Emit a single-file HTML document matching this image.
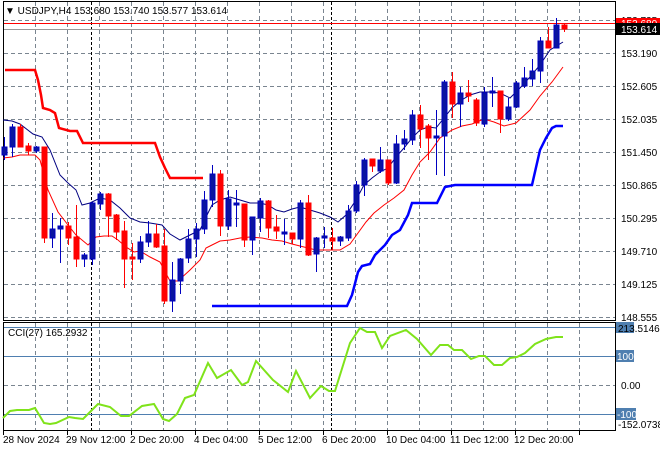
<!DOCTYPE html>
<html><head><meta charset="utf-8"><style>
html,body{margin:0;padding:0;background:#fff;width:660px;height:450px;overflow:hidden}
svg{display:block;font-family:"Liberation Sans",sans-serif;font-size:10px}
</style></head><body>
<svg width="660" height="450" viewBox="0 0 660 450" xmlns="http://www.w3.org/2000/svg">
<rect width="660" height="450" fill="#fff"/>
<g stroke="#7a8590" stroke-width="1" stroke-dasharray="4,3" fill="none">
<path d="M4 20.5H615M4 53.5H615M4 86.5H615M4 119.5H615M4 152.5H615M4 185.5H615M4 218.5H615M4 251.5H615M4 284.5H615M4 317.5H615"/>
<path d="M35.5 2V320M67.5 2V320M99.5 2V320M131.5 2V320M163.5 2V320M195.5 2V320M227.5 2V320M259.5 2V320M291.5 2V320M323.5 2V320M355.5 2V320M387.5 2V320M419.5 2V320M451.5 2V320M483.5 2V320M515.5 2V320M547.5 2V320M579.5 2V320"/>
<path d="M4 385.5H615"/>
<path d="M35.5 323V430M67.5 323V430M99.5 323V430M131.5 323V430M163.5 323V430M195.5 323V430M227.5 323V430M259.5 323V430M291.5 323V430M323.5 323V430M355.5 323V430M387.5 323V430M419.5 323V430M451.5 323V430M483.5 323V430M515.5 323V430M547.5 323V430M579.5 323V430"/>
</g>
<g stroke="#000" stroke-dasharray="3,2"><path d="M91.5 2V320M331.5 2V320M91.5 323V430M331.5 323V430"/></g>
<rect x="3.5" y="1.5" width="612" height="319" fill="none" stroke="#000"/>
<rect x="3.5" y="322.5" width="612" height="108" fill="none" stroke="#000"/>
<path d="M4 23.5H615" stroke="#ff0000"/>
<path d="M4 29.5H615" stroke="#999"/>
<polyline fill="none" stroke="#ff0000" stroke-width="2.5" points="5,70 35,70 38,80 41,95 43,108 50,110 55,113 59,128 70,131 77,131 83,143 155,143 160,157 165,168 170,178 203,178"/>
<polyline fill="none" stroke="#0000ff" stroke-width="2.5" points="212,306 347,306 352,295 358,272 362,266 370,264 375,255 380,250 385,245 392,235 400,230 408,215 412,203 437,203 445,187 455,185 532,185 540,150 546,138 552,128 556,126 563,126"/>
<polyline fill="none" stroke="#000080" stroke-width="1" points="3,120 12,121 20,124 33,134 42,137 50,150 60,175 68,183 76,190 82,205 90,203 100,198 110,200 120,208 130,218 140,222 150,223 162,225 170,234 180,240 190,235 200,230 208,213 212,205 220,200 230,197 240,200 250,203 260,203 268,205 276,210 284,212 292,209 300,207 310,210 320,213 330,217 338,222 346,215 356,200 364,185 372,178 380,172 388,168 396,157 404,148 412,138 420,130 428,127 436,128 444,118 452,108 460,101 470,95 480,92 490,92 500,93 510,98 520,88 530,77 540,65 550,50 563,42"/>
<polyline fill="none" stroke="#ff0000" stroke-width="1" points="3,158 12,157 20,155 35,155 40,160 48,190 58,212 68,225 76,235 88,245 96,237 104,236 112,236 118,240 126,247 134,252 140,251 150,257 160,262 170,281 178,281 190,270 200,260 206,248 212,245 220,241 230,240 240,238 250,237 262,238 272,240 282,241 292,244 304,247 316,250 326,250 340,250 350,244 358,233 366,222 374,213 384,205 394,198 404,190 412,175 420,162 430,152 440,138 452,130 462,126 472,124 484,119 494,122 504,126 516,123 530,110 540,96 552,82 563,67"/>
<g stroke-width="1">
<g stroke="#0000c0" fill="#0a14a0">
<path d="M4.5 137V160M12.5 124V157M36.5 146V153M52.5 213V248M60.5 218V263M84.5 253V267M92.5 202V265M100.5 192V210M140.5 236V263M148.5 221V247M172.5 262V312M180.5 258V294M188.5 229V263M196.5 223V257M204.5 191V234M212.5 165V207M228.5 190V230M236.5 190V227M252.5 217V255M260.5 198V232M284.5 219V245M300.5 200V248M316.5 237V272M324.5 227V248M340.5 236V246M348.5 205V241M356.5 181V213M364.5 158V196M380.5 147V173M396.5 135V184M404.5 130V150M412.5 110V145M436.5 110V175M444.5 80V176M460.5 87V127M484.5 87V127M492.5 77V107M508.5 98V121M516.5 81V108M524.5 67V88M532.5 59V86M540.5 37V83M556.5 18V48"/>
<rect x="2" y="147" width="5" height="8"/><rect x="10" y="127" width="5" height="20"/><rect x="34" y="147" width="5" height="4"/><rect x="50" y="229" width="5" height="9"/><rect x="58" y="226" width="5" height="3"/><rect x="82" y="255" width="5" height="4"/><rect x="90" y="203" width="5" height="56"/><rect x="98" y="194" width="5" height="10"/><rect x="138" y="242" width="5" height="17"/><rect x="146" y="234" width="5" height="8"/><rect x="170" y="280" width="5" height="21"/><rect x="178" y="259" width="5" height="22"/><rect x="186" y="239" width="5" height="19"/><rect x="194" y="229" width="5" height="10"/><rect x="202" y="200" width="5" height="29"/><rect x="210" y="174" width="5" height="26"/><rect x="226" y="199" width="5" height="27"/><rect x="234" y="203" width="5" height="2"/><rect x="250" y="217" width="5" height="23"/><rect x="258" y="201" width="5" height="17"/><rect x="282" y="232" width="5" height="2"/><rect x="298" y="203" width="5" height="36"/><rect x="314" y="238" width="5" height="16"/><rect x="322" y="236" width="5" height="2"/><rect x="338" y="237" width="5" height="4"/><rect x="346" y="211" width="5" height="27"/><rect x="354" y="185" width="5" height="26"/><rect x="362" y="160" width="5" height="25"/><rect x="378" y="160" width="5" height="11"/><rect x="394" y="144" width="5" height="39"/><rect x="402" y="139" width="5" height="5"/><rect x="410" y="115" width="5" height="25"/><rect x="434" y="136" width="5" height="2"/><rect x="442" y="82" width="5" height="54"/><rect x="458" y="93" width="5" height="11"/><rect x="482" y="93" width="5" height="31"/><rect x="490" y="91" width="5" height="2"/><rect x="506" y="107" width="5" height="12"/><rect x="514" y="83" width="5" height="24"/><rect x="522" y="78" width="5" height="8"/><rect x="530" y="71" width="5" height="8"/><rect x="538" y="41" width="5" height="30"/><rect x="554" y="25" width="5" height="23"/>
</g>
<g stroke="#ff0000" fill="#ff0000">
<path d="M20.5 124V147M28.5 143V155M44.5 147V243M68.5 222V245M76.5 205V267M108.5 193V237M116.5 214V240M124.5 221V288M132.5 243V280M156.5 224V248M164.5 229V304M220.5 170V236M244.5 204V247M268.5 200V238M276.5 215V239M292.5 233V244M308.5 195V256M332.5 228V250M372.5 159V172M388.5 160V185M420.5 105V148M428.5 124V160M452.5 72V118M468.5 80V102M476.5 98V126M500.5 91V133M548.5 27V48M564.5 23V32"/>
<rect x="18" y="127" width="5" height="20"/><rect x="26" y="146" width="5" height="5"/><rect x="42" y="147" width="5" height="91"/><rect x="66" y="226" width="5" height="12"/><rect x="74" y="237" width="5" height="22"/><rect x="106" y="194" width="5" height="22"/><rect x="114" y="215" width="5" height="17"/><rect x="122" y="231" width="5" height="28"/><rect x="130" y="257" width="5" height="2"/><rect x="154" y="234" width="5" height="13"/><rect x="162" y="246" width="5" height="55"/><rect x="218" y="174" width="5" height="52"/><rect x="242" y="204" width="5" height="36"/><rect x="266" y="201" width="5" height="27"/><rect x="274" y="227" width="5" height="4"/><rect x="290" y="233" width="5" height="6"/><rect x="306" y="203" width="5" height="52"/><rect x="330" y="238" width="5" height="3"/><rect x="370" y="159" width="5" height="7"/><rect x="386" y="160" width="5" height="23"/><rect x="418" y="115" width="5" height="14"/><rect x="426" y="126" width="5" height="12"/><rect x="450" y="82" width="5" height="22"/><rect x="466" y="93" width="5" height="3"/><rect x="474" y="100" width="5" height="23"/><rect x="498" y="91" width="5" height="28"/><rect x="546" y="41" width="5" height="7"/><rect x="562" y="25" width="5" height="4"/>
</g>
</g>
<g stroke="#4f7fb0"><path d="M4 327.5H615M4 356.5H615M4 414.5H615"/></g>
<polyline fill="none" stroke="#7fe31a" stroke-width="2" points="3,418 10,411 17,410 29,410 35,408 44,423 50,424 56,423 69,417 75,418 83,419 90,412 98,404 110,407 121,416 129,416 142,406 154,404 163,419 169,421 177,414 185,398 194,395 208,363 217,378 231,370 242,385 248,382 256,361 273,380 288,392 296,371 310,398 321,386 329,391 335,391 350,343 360,328 367,332 375,332 382,348 390,336 406,330 417,339 431,355 440,345 448,345 454,350 462,350 471,359 479,356 485,356 494,365 502,365 510,358 517,357 525,353 535,344 546,339 556,337 563,337"/>
<text x="5" y="14" fill="#000">▼ USDJPY,H4  153.680 153.740 153.577 153.614</text>
<text x="8" y="336" fill="#000">CCI(27) 165.2932</text>
<g fill="#000">
<text x="621" y="24">153.725</text>
<text x="621" y="57">153.190</text>
<text x="621" y="90">152.605</text>
<text x="621" y="123">152.035</text>
<text x="621" y="156">151.450</text>
<text x="621" y="189">150.865</text>
<text x="621" y="222">150.295</text>
<text x="621" y="255">149.710</text>
<text x="621" y="288">149.125</text>
<text x="621" y="321">148.555</text>
</g>
<rect x="616" y="18" width="44" height="11" fill="#ff0000"/>
<text x="621" y="27" fill="#fff">153.680</text>
<rect x="616" y="23" width="44" height="12" fill="#000"/>
<text x="621" y="33" fill="#fff">153.614</text>
<rect x="616" y="322" width="18" height="11" fill="#4f7fb0"/>
<text x="618" y="332" fill="#000">213.5146</text>
<rect x="616" y="350" width="18" height="12" fill="#4f7fb0"/>
<text x="617" y="360" fill="#fff">100</text>
<text x="621" y="389" fill="#000">0.00</text>
<rect x="616" y="408" width="20" height="12" fill="#4f7fb0"/>
<text x="617" y="418" fill="#fff">-100</text>
<text x="618" y="428" fill="#000">-152.0738</text>
<g stroke="#000"><path d="M3.5 430V435M67.5 430V435M131.5 430V435M195.5 430V435M259.5 430V435M323.5 430V435M387.5 430V435M451.5 430V435M515.5 430V435M579.5 430V435"/></g>
<g fill="#000">
<text x="3" y="443">28 Nov 2024</text>
<text x="66" y="443">29 Nov 12:00</text>
<text x="130" y="443">2 Dec 20:00</text>
<text x="194" y="443">4 Dec 04:00</text>
<text x="258" y="443">5 Dec 12:00</text>
<text x="322" y="443">6 Dec 20:00</text>
<text x="386" y="443">10 Dec 04:00</text>
<text x="450" y="443">11 Dec 12:00</text>
<text x="514" y="443">12 Dec 20:00</text>
</g>
</svg>
</body></html>
